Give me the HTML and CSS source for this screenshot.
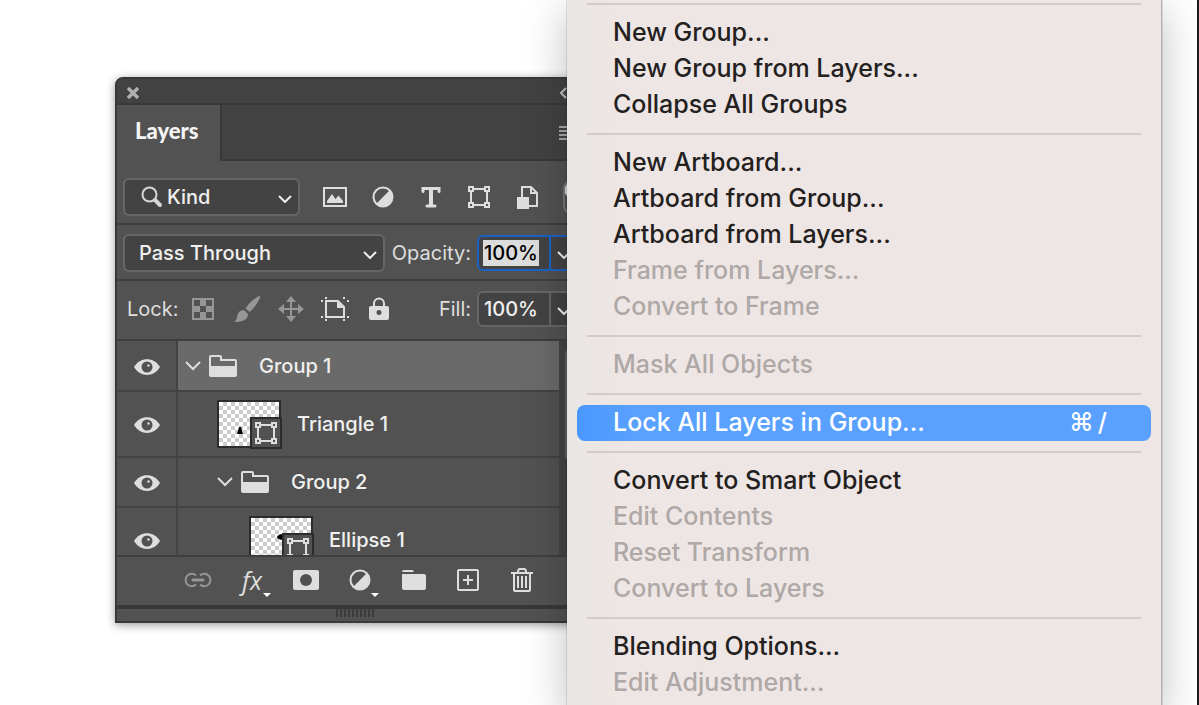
FILE: index.html
```html
<!DOCTYPE html>
<html lang="en">
<head>
  <meta charset="UTF-8" />
  <title>Layers</title>
  <link rel="stylesheet" href="styles.css">
</head>
<body>
  <!-- shared icons -->
  <svg width="0" height="0" class="sprite" aria-hidden="true">
    <symbol id="chevron" viewBox="0 0 14 8"><path d="M1 1l6 6 6-6" fill="none" stroke="currentColor" stroke-width="2"/></symbol>
    <symbol id="eye" viewBox="0 0 26 16"><path d="M0 8C6-2.500 20-2.500 26 8 20 18.500 6 18.500 0 8z" fill="currentColor"/><circle cx="13" cy="8" r="5.500" fill="#525252"/><circle cx="14.500" cy="6.500" r="1.200" fill="currentColor"/></symbol>
    <symbol id="folder" viewBox="0 0 28 22"><path d="M1 11V2q0-1 1-1h9q1 0 1 1v3h14q1 0 1 1v5" fill="none" stroke="currentColor" stroke-width="2"/><path d="M0 11h28v9q0 2-2 2H2q-2 0-2-2z" fill="currentColor"/></symbol>
    <symbol id="shape" viewBox="0 0 24 24"><path d="M6 4h12M6 20h12M4 5v14M20 5v14" stroke="currentColor" stroke-width="2"/><path d="M2 2h4v4H2zM18 2h4v4h-4zM2 18h4v4H2zM18 18h4v4h-4z" fill="#525252" stroke="currentColor" stroke-width="2"/></symbol>
    <symbol id="adjust" viewBox="0 0 24 24"><circle cx="12" cy="12" r="9.500" fill="none" stroke="currentColor" stroke-width="2"/><path d="M18.700 5.300A9.500 9.500 0 0 1 5.300 18.700z" fill="currentColor"/></symbol>
  </svg>

  <main class="stage">
    <section class="panel">
      <header class="titlebar">
        <button class="icon-btn" aria-label="Close"><svg width="12" height="12" viewBox="0 0 12 12"><path d="M1 1l10 10M11 1L1 11" stroke="#b0b0b0" stroke-width="3.400"/></svg></button>
        <button class="icon-btn collapse" aria-label="Collapse"><svg width="16" height="12" viewBox="0 0 16 12"><path d="M7 1L2 6l5 5M14 1L9 6l5 5" fill="none" stroke="#c4c4c4" stroke-width="2"/></svg></button>
      </header>

      <div class="tabs">
        <button class="tab">Layers</button>
        <button class="icon-btn panel-menu" aria-label="Panel menu"><svg width="18" height="14" viewBox="0 0 18 14"><path d="M0 1h18M0 5h18M0 9h18M0 13h18" stroke="#aaa" stroke-width="2"/></svg></button>
      </div>

      <div class="bar filter-bar">
        <div class="select kind">
          <svg width="22" height="22" viewBox="0 0 22 22"><circle cx="8.500" cy="8.500" r="7" fill="none" stroke="#d6d6d6" stroke-width="2"/><path d="M14 14l5 5" stroke="#d6d6d6" stroke-width="4" stroke-linecap="round"/></svg>
          <select aria-label="Filter type"><option>Kind</option></select>
          <svg class="chevron" width="14" height="8"><use href="#chevron"/></svg>
        </div>
        <div class="filters">
          <button class="icon-btn" aria-label="Pixel layers"><svg width="24" height="20" viewBox="0 0 24 20"><path d="M1 1h22v18H1z" fill="none" stroke="currentColor" stroke-width="2"/><path d="M4 16V14l5-7 3.500 5L15.500 8.500l4.500 5.500v2z" fill="currentColor"/></svg></button>
          <button class="icon-btn" aria-label="Adjustment layers"><svg width="24" height="24"><use href="#adjust"/></svg></button>
          <button class="icon-btn" aria-label="Type layers"><svg width="20" height="22" viewBox="0 0 20 22"><path d="M2 5.500V2.500h16v3M6 20h8" fill="none" stroke="currentColor" stroke-width="3" stroke-linecap="round"/><path d="M10 2v18" stroke="currentColor" stroke-width="4"/></svg></button>
          <button class="icon-btn" aria-label="Shape layers"><svg width="24" height="24"><use href="#shape"/></svg></button>
          <button class="icon-btn" aria-label="Smart objects"><svg width="24" height="24" viewBox="0 0 24 24"><path d="M7 12V2h9l6 6v13h-9" fill="none" stroke="currentColor" stroke-width="2"/><path d="M16 2v6h6" fill="none" stroke="currentColor" stroke-width="2"/><path d="M2 12h12v12H2z" fill="currentColor"/></svg></button>
          <button class="toggle" aria-label="Toggle filter"></button>
        </div>
      </div>

      <div class="bar blend-bar">
        <div class="select blend">
          <select aria-label="Blend mode"><option>Pass Through</option></select>
          <svg class="chevron" width="14" height="8"><use href="#chevron"/></svg>
        </div>
        <label class="value-label" for="opacity">Opacity:</label>
        <div class="value active">
          <input id="opacity" type="text" value="100%">
          <button aria-label="Opacity slider"><svg width="14" height="8"><use href="#chevron"/></svg></button>
        </div>
      </div>

      <div class="bar lock-bar">
        <span class="lock-label">Lock:</span>
        <div class="locks">
          <button class="icon-btn dim" aria-label="Lock transparent pixels"><svg width="22" height="22" viewBox="0 0 22 22"><path d="M1 1h20v20H1z" fill="none" stroke="currentColor" stroke-width="2"/><path d="M8 2h6v6H8zM2 8h6v6H2zM14 8h6v6h-6zM8 14h6v6H8z" fill="currentColor"/></svg></button>
          <button class="icon-btn dim" aria-label="Lock image pixels"><svg width="28" height="28" viewBox="0 0 28 28"><path d="M26 1q2 0 .5 3-4 8-10 13l-4-3.500Q17 6 26 1z" fill="currentColor"/><path d="M11 15l4 4q0 8-14 8 3-2 3-5 1-7 7-7z" fill="currentColor"/></svg></button>
          <button class="icon-btn dim" aria-label="Lock position"><svg width="26" height="26" viewBox="0 0 26 26"><path d="M13 4v18M4 13h18" stroke="currentColor" stroke-width="2"/><path d="M13 0l5 6H8zM13 26l5-6H8zM0 13l6-5v10zM26 13l-6-5v10z" fill="currentColor"/></svg></button>
          <button class="icon-btn" aria-label="Lock artboard nesting"><svg width="28" height="24" viewBox="0 0 28 24"><path d="M5 4h12l6 6v10H5z" fill="none" stroke="currentColor" stroke-width="2"/><path d="M16 4v7h7z" fill="currentColor"/><path d="M4 0h2v2H4zM22 0h2v2h-2zM0 3h2v2H0zM26 3h2v2h-2zM0 19h2v2H0zM26 19h2v2h-2zM4 22h2v2H4zM22 22h2v2h-2z" fill="currentColor"/></svg></button>
          <button class="icon-btn" aria-label="Lock all"><svg width="20" height="24" viewBox="0 0 20 24"><path d="M5 11V6.500a5 5 0 0 1 10 0V11" fill="none" stroke="currentColor" stroke-width="2"/><rect y="9" width="20" height="14" rx="2" fill="currentColor"/><circle cx="10" cy="15.500" r="2.500" fill="#525252"/></svg></button>
        </div>
        <label class="value-label" for="fill">Fill:</label>
        <div class="value">
          <input id="fill" type="text" value="100%">
          <button aria-label="Fill slider"><svg width="14" height="8"><use href="#chevron"/></svg></button>
        </div>
      </div>

      <div class="list-wrap">
        <ul class="layers">
          <li class="layer group selected">
            <button class="visibility" aria-label="Toggle visibility"><svg width="26" height="16"><use href="#eye"/></svg></button>
            <div class="layer-body">
              <svg width="16" height="10" viewBox="0 0 16 10"><path d="M1 1l7 7 7-7" fill="none" stroke="currentColor" stroke-width="2"/></svg>
              <svg width="28" height="22"><use href="#folder"/></svg>
              <span class="name">Group 1</span>
            </div>
          </li>
          <li class="layer item">
            <button class="visibility" aria-label="Toggle visibility"><svg width="26" height="16"><use href="#eye"/></svg></button>
            <div class="layer-body">
              <div class="thumb">
                <svg class="art" width="60" height="44" viewBox="0 0 60 44"><path d="M20 25h2l2 7h-6z" fill="#000"/></svg>
                <span class="badge"><svg width="24" height="24"><use href="#shape"/></svg></span>
              </div>
              <span class="name">Triangle 1</span>
            </div>
          </li>
          <li class="layer group nested">
            <button class="visibility" aria-label="Toggle visibility"><svg width="26" height="16"><use href="#eye"/></svg></button>
            <div class="layer-body">
              <svg width="16" height="10" viewBox="0 0 16 10"><path d="M1 1l7 7 7-7" fill="none" stroke="currentColor" stroke-width="2"/></svg>
              <svg width="28" height="22"><use href="#folder"/></svg>
              <span class="name">Group 2</span>
            </div>
          </li>
          <li class="layer item nested">
            <button class="visibility" aria-label="Toggle visibility"><svg width="26" height="16"><use href="#eye"/></svg></button>
            <div class="layer-body">
              <div class="thumb">
                <svg class="art" width="60" height="44" viewBox="0 0 60 44"><ellipse cx="32" cy="19" rx="6" ry="3" fill="#000"/></svg>
                <span class="badge"><svg width="24" height="24"><use href="#shape"/></svg></span>
              </div>
              <span class="name">Ellipse 1</span>
            </div>
          </li>
        </ul>
        <div class="scrollbar"><span class="scroll-thumb"></span></div>
      </div>

      <footer class="actions">
        <button class="icon-btn dim" aria-label="Link layers"><svg width="28" height="16" viewBox="0 0 28 16"><path d="M12 3.500A6.200 6.200 0 1 0 12 12.500M16 3.500a6.200 6.200 0 1 1 0 9" fill="none" stroke="currentColor" stroke-width="2"/><path d="M9 8h10" stroke="currentColor" stroke-width="3" stroke-linecap="round"/></svg></button>
        <button class="icon-btn fx has-menu" aria-label="Layer style">fx</button>
        <button class="icon-btn" aria-label="Add mask"><svg width="26" height="20" viewBox="0 0 26 20"><rect width="26" height="20" rx="2" fill="currentColor"/><circle cx="13" cy="10" r="6" fill="#525252"/></svg></button>
        <button class="icon-btn has-menu" aria-label="New adjustment layer"><svg width="24" height="24"><use href="#adjust"/></svg></button>
        <button class="icon-btn" aria-label="New group"><svg width="24" height="20" viewBox="0 0 24 20"><path d="M0 2q0-2 2-2h8q1.500 0 2 2z" fill="currentColor"/><path d="M0 4h22q2 0 2 2v12q0 2-2 2H2q-2 0-2-2z" fill="currentColor"/></svg></button>
        <button class="icon-btn" aria-label="New layer"><svg width="22" height="22" viewBox="0 0 22 22"><rect x="1" y="1" width="20" height="20" rx="1" fill="none" stroke="currentColor" stroke-width="2"/><path d="M11 6v10M6 11h10" stroke="currentColor" stroke-width="2"/></svg></button>
        <button class="icon-btn" aria-label="Delete layer"><svg width="22" height="24" viewBox="0 0 22 24"><path d="M0 5h22M3 5v17q0 1 1 1h14q1 0 1-1V5M7 4q0-3 2-3h4q2 0 2 3M7 8v12M11 8v12M15 8v12" fill="none" stroke="currentColor" stroke-width="2"/></svg></button>
      </footer>
      <div class="resize"><span class="grip"></span></div>
    </section>

    <nav class="menu" aria-label="Layer menu">
      <hr>
      <button>New Group...</button>
      <button>New Group from Layers...</button>
      <button>Collapse All Groups</button>
      <hr>
      <button>New Artboard...</button>
      <button>Artboard from Group...</button>
      <button>Artboard from Layers...</button>
      <button disabled>Frame from Layers...</button>
      <button disabled>Convert to Frame</button>
      <hr>
      <button disabled>Mask All Objects</button>
      <hr>
      <button class="current">Lock All Layers in Group... <kbd>⌘<i>/</i></kbd></button>
      <hr>
      <button>Convert to Smart Object</button>
      <button disabled>Edit Contents</button>
      <button disabled>Reset Transform</button>
      <button disabled>Convert to Layers</button>
      <hr>
      <button>Blending Options...</button>
      <button disabled>Edit Adjustment...</button>
    </nav>
  </main>
</body>
</html>
```

FILE: styles.css
```css
* {
  box-sizing: border-box;
}
body {
  margin: 0;
  background: #fff;
  color: #dedede;
  font-family: Inter, "Liberation Sans", sans-serif;
  font-size: 20px;
}
button, input, select {
  font: inherit;
  color: inherit;
  background: none;
  border: none;
  margin: 0;
  padding: 0;
}
svg {
  display: block;
  flex: none;
}
.sprite {
  position: absolute;
}
.stage {
  display: flex;
  align-items: flex-start;
  height: 100vh;
  overflow: hidden;
  padding: 0 35px 0 115px;
  border-right: 2px solid #1c1c1c;
}

/* panel */
.panel {
  flex: 0 0 480px;
  min-width: 0;
  margin: 77px -28px 0 0;
  background: #525252;
  border: 2px solid #383838;
  border-radius: 8px 8px 0 0;
  box-shadow: 0 2px 10px rgba(0,0,0,0.4);
}
.icon-btn {
  display: flex;
  align-items: center;
  justify-content: center;
  color: #dedede;
}
.dim {
  color: #969696;
}
.titlebar {
  display: flex;
  align-items: center;
  justify-content: space-between;
  height: 26px;
  padding: 4px 18px 0 10px;
  background: #424242;
  border-bottom: 2px solid #383838;
  border-radius: 6px 6px 0 0;
}
.tabs {
  display: flex;
  height: 56px;
  background: linear-gradient(#383838, #383838) bottom / 100% 2px no-repeat #424242;
}
.tab {
  padding: 0 21px 6px 18px;
  border-right: 2px solid #383838;
  background: #525252;
  color: #f4f4f4;
  font-family: Lato, "Liberation Sans", sans-serif;
  font-size: 22px;
  font-weight: 900;
}
.panel-menu {
  margin: 0 16px 0 auto;
}
.bar {
  display: flex;
  align-items: center;
  padding: 0 16px 0 6px;
  border-bottom: 2px solid #3e3e3e;
}
.filter-bar {
  height: 64px;
  padding-top: 10px;
  padding-right: 0;
}
.blend-bar {
  height: 56px;
  padding-top: 2px;
}
.lock-bar {
  height: 60px;
  padding-bottom: 2px;
  padding-left: 10px;
}
.select {
  display: flex;
  align-items: center;
  height: 38px;
  padding: 0 6px 0 14px;
  border: 2px solid #666;
  border-radius: 6px;
  background: #434343;
  color: #f0f0f0;
  font-weight: 500;
}
.select select {
  flex: 1;
  min-width: 0;
  appearance: none;
}
.chevron {
  margin-top: 4px;
}
.kind {
  flex: 0 0 177px;
  gap: 4px;
  padding-left: 16px;
}
.blend {
  flex: 0 0 262px;
}
.filters {
  display: flex;
  align-items: center;
  gap: 24px;
  margin-left: 23px;
}
.filters .icon-btn {
  width: 24px;
}
.toggle {
  width: 20px;
  height: 34px;
  border: 2px solid #777;
  border-radius: 8px;
  background: radial-gradient(circle at 8px 8px, #dedede 8px, #525252 9px);
}
.value-label {
  margin-left: auto;
  padding-right: 6px;
}
.value {
  display: flex;
  flex: 0 0 100px;
  height: 36px;
  border: 2px solid #666;
  border-radius: 6px;
  background: #434343;
  color: #f0f0f0;
  font-weight: 500;
}
.value input {
  width: 56px;
  height: 26px;
  margin: 3px 10px 3px 4px;
  padding-left: 1px;
}
.value button {
  flex: 1;
  padding: 4px 0 0 6px;
  border-left: 2px solid #666;
}
.active, .active button {
  border-color: #1b62c7;
}
.active input {
  background: #dcdcdc;
  color: #000;
}
.locks {
  display: flex;
  gap: 16px;
  margin-left: 11px;
}
.locks .icon-btn {
  width: 28px;
}

/* layer list */
.list-wrap {
  display: flex;
  height: 216px;
  overflow: hidden;
  border-bottom: 2px solid #3e3e3e;
}
.layers {
  flex: 0 0 442px;
  margin: 0;
  padding: 0;
  list-style: none;
}
.layer {
  display: flex;
  height: 66px;
  border-bottom: 2px solid #434343;
}
.group {
  height: 51px;
}
.nested.group {
  height: 50px;
}
.visibility {
  display: flex;
  flex: 0 0 61px;
  align-items: center;
  justify-content: center;
  padding-top: 2px;
  border-right: 2px solid #434343;
}
.layer-body {
  display: flex;
  flex: 1;
  align-items: center;
  padding-left: 7px;
  gap: 8px;
}
.group .name {
  margin-left: 14px;
}
.nested .layer-body {
  padding-left: 39px;
}
.item .layer-body {
  padding-left: 39px;
  gap: 16px;
}
.item.nested .layer-body {
  padding-left: 71px;
}
.selected .layer-body {
  background: #6a6a6a;
}
.name {
  color: #f0f0f0;
  font-weight: 500;
}
.thumb {
  position: relative;
  border: 2px solid #2c2c2c;
  background: repeating-conic-gradient(#ccc 0 25%, #fff 0 50%) 0 0 / 8px 8px;
}
.badge {
  position: absolute;
  right: -3px;
  bottom: -3px;
  padding: 2px;
  border: 2px solid #2c2c2c;
  background: #525252;
}
.scrollbar {
  flex: 1;
  padding: 7px 0 0 6px;
  background: #454545;
}
.scroll-thumb {
  display: block;
  width: 14px;
  height: 114px;
  border-radius: 7px;
  background: #666;
}

/* bottom bar */
.actions {
  display: flex;
  gap: 24px;
  height: 48px;
  padding: 0 0 2px 66px;
}
.actions .icon-btn {
  width: 30px;
}
.fx {
  font-family: "Open Sans", "Liberation Sans", sans-serif;
  font-size: 25px;
  font-style: italic;
}
.has-menu {
  position: relative;
}
.has-menu::after {
  content: "";
  position: absolute;
  right: -4px;
  bottom: 6px;
  border: 4px solid transparent;
  border-top-color: #fff;
  border-bottom: none;
}
.resize {
  height: 16px;
  border-top: 4px solid #383838;
}
.grip {
  display: block;
  width: 39px;
  height: 8px;
  margin: 0 auto;
  background: repeating-linear-gradient(90deg, #3c3c3c 0 2px, #525252 2px 4px);
}

/* menu */
.menu {
  position: relative;
  flex: 1;
  min-height: 100vh;
  padding: 3px 10px 10px;
  border-right: 1px solid #b5b2b0;
  background: linear-gradient(90deg, #e9e6e3, #eee6e4 60px);
  box-shadow: 0 0 0 1px rgba(0,0,0,0.1), 0 10px 40px rgba(0,0,0,0.25);
}
.menu hr {
  height: 2px;
  margin: 10px;
  border: none;
  background: #d3cbc9;
}
.menu hr:first-child {
  margin-top: 0;
}
.menu button {
  display: flex;
  align-items: center;
  justify-content: space-between;
  width: 100%;
  height: 36px;
  padding: 0 44px 2px 36px;
  border-radius: 8px;
  color: #232020;
  font-size: 25px;
  font-weight: 500;
}
.menu button:disabled {
  color: #aea8a6;
}
.menu .current {
  background: linear-gradient(90deg, #4997fe, #5aa1ff 60px);
  color: #fff;
}
.menu kbd {
  display: flex;
  align-items: center;
  gap: 4px;
  font-family: Inter, "DejaVu Sans", sans-serif;
}
.menu i {
  font-style: normal;
}
```
